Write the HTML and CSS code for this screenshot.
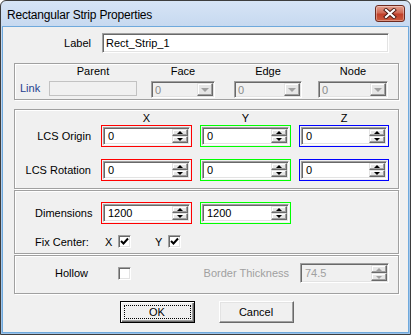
FILE: index.html
```html
<!DOCTYPE html>
<html lang="en">
<head>
  <meta charset="UTF-8" />
  <meta name="viewport" content="width=device-width, initial-scale=1.0"/>
  <title>Rectangular Strip Properties</title>
  <link rel="stylesheet" href="styles.css">
</head>
<body>
  <div class="window">
    <div class="titlebar">
      <span class="title">Rectangular Strip Properties</span>
      <button class="close-btn" type="button">
        <svg width="14" height="11" viewBox="0 0 14 11">
          <path d="M3 2 L11 9 M11 2 L3 9" stroke="#4a1a12" stroke-width="4" stroke-linecap="square"/>
          <path d="M3 2 L11 9 M11 2 L3 9" stroke="#fff" stroke-width="2.2" stroke-linecap="square"/>
        </svg>
      </button>
    </div>

    <div class="client">
      <div class="label-row">
        <span class="row-label">Label</span>
        <div class="edit name-edit">Rect_Strip_1</div>
      </div>

      <!-- link -->
      <div class="group link-group">
        <div class="col link-col"><span class="col-head"></span><span class="link-text">Link</span></div>
        <div class="col parent-col"><span class="col-head">Parent</span><div class="flat-edit"></div></div>
        <div class="col face-col">
          <span class="col-head">Face</span>
          <div class="combo"><span class="combo-val">0</span><span class="drop"><i class="tri-down gray"></i></span></div>
        </div>
        <div class="col edge-col">
          <span class="col-head">Edge</span>
          <div class="combo"><span class="combo-val">0</span><span class="drop"><i class="tri-down gray"></i></span></div>
        </div>
        <div class="col node-col">
          <span class="col-head">Node</span>
          <div class="combo"><span class="combo-val">0</span><span class="drop"><i class="tri-down gray"></i></span></div>
        </div>
      </div>

      <!-- lcs -->
      <div class="group lcs-group">
        <div class="grid4 axis-row">
          <span></span><span class="axis">X</span><span class="axis">Y</span><span class="axis">Z</span>
        </div>
        <div class="grid4">
          <span class="row-label">LCS Origin</span>
          <div class="spin red"><div class="edit spin-edit"><span class="val">0</span><span class="arrows"><span class="arr"><i class="tri-up"></i></span><span class="arr"><i class="tri-down"></i></span></span></div></div>
          <div class="spin green"><div class="edit spin-edit"><span class="val">0</span><span class="arrows"><span class="arr"><i class="tri-up"></i></span><span class="arr"><i class="tri-down"></i></span></span></div></div>
          <div class="spin blue"><div class="edit spin-edit"><span class="val">0</span><span class="arrows"><span class="arr"><i class="tri-up"></i></span><span class="arr"><i class="tri-down"></i></span></span></div></div>
        </div>
        <div class="grid4 second-row">
          <span class="row-label">LCS Rotation</span>
          <div class="spin red"><div class="edit spin-edit"><span class="val">0</span><span class="arrows"><span class="arr"><i class="tri-up"></i></span><span class="arr"><i class="tri-down"></i></span></span></div></div>
          <div class="spin green"><div class="edit spin-edit"><span class="val">0</span><span class="arrows"><span class="arr"><i class="tri-up"></i></span><span class="arr"><i class="tri-down"></i></span></span></div></div>
          <div class="spin blue"><div class="edit spin-edit"><span class="val">0</span><span class="arrows"><span class="arr"><i class="tri-up"></i></span><span class="arr"><i class="tri-down"></i></span></span></div></div>
        </div>
      </div>

      <!-- dimensions -->
      <div class="group dim-group">
        <div class="grid4">
          <span class="left-label">Dimensions</span>
          <div class="spin red"><div class="edit spin-edit"><span class="val">1200</span><span class="arrows"><span class="arr"><i class="tri-up"></i></span><span class="arr"><i class="tri-down"></i></span></span></div></div>
          <div class="spin green"><div class="edit spin-edit"><span class="val">1200</span><span class="arrows"><span class="arr"><i class="tri-up"></i></span><span class="arr"><i class="tri-down"></i></span></span></div></div>
        </div>
        <div class="fix-row">
          <span class="fix-label">Fix Center:</span>
          <span class="axis-label">X</span>
          <span class="check"><svg width="9" height="9" viewBox="0 0 9 9"><path d="M1 4 L3.5 6.5 L8 1.5" stroke="#000" stroke-width="2" fill="none"/></svg></span>
          <span class="axis-label y-label">Y</span>
          <span class="check"><svg width="9" height="9" viewBox="0 0 9 9"><path d="M1 4 L3.5 6.5 L8 1.5" stroke="#000" stroke-width="2" fill="none"/></svg></span>
        </div>
      </div>

      <!-- hollow -->
      <div class="group hollow-group">
        <div class="grid4">
          <span class="row-label hollow-label">Hollow</span>
          <div><span class="check hollow-check"></span></div>
          <span class="row-label disabled">Border Thickness</span>
          <div class="edit spin-edit thick-edit"><span class="val disabled">74.5</span><span class="arrows"><span class="arr"><i class="tri-up gray"></i></span><span class="arr"><i class="tri-down gray"></i></span></span></div>
        </div>
      </div>

      <div class="buttons">
        <button class="btn default" type="button"><span class="focus">OK</span></button>
        <button class="btn" type="button">Cancel</button>
      </div>
    </div>
  </div>
</body>
</html>
```

FILE: styles.css
```css
body {
  margin: 0;
  background-color: #fff;
  font-family: "Liberation Sans", Arial, sans-serif;
  font-size: 11px;
  color: #000;
}
.window {
  width: 411px;
  height: 335px;
  box-sizing: border-box;
  border: 1px solid #3d3d3d;
  border-radius: 6px 6px 0 0;
  background: linear-gradient(#d6e4f5, #c4d7ef 30px, #9cc3ea);
  display: flex;
  flex-direction: column;
}
.titlebar {
  height: 26px;
  display: flex;
  align-items: flex-start;
  flex-shrink: 0;
}
.title {
  font-size: 12px;
  letter-spacing: -0.2px;
  line-height: 26px;
  padding-left: 6px;
  padding-top: 1px;
}
.close-btn {
  margin-left: auto;
  margin-right: 5px;
  margin-top: 4px;
  width: 30px;
  height: 17px;
  padding: 0;
  border: 1px solid #6e2a1f;
  border-radius: 3px;
  background: linear-gradient(#e3a08f, #d06a55 45%, #c0402a 55%, #cc5b3e);
  box-shadow: inset 0 0 0 1px rgba(255,255,255,0.35);
  display: flex;
  align-items: center;
  justify-content: center;
}
.client {
  flex: 1;
  margin: 0 2px 2px 2px;
  background-color: #f0f0f0;
  padding: 6px 9px 0 11px;
  box-shadow: 0 0 0 1px #6fa9dc;
}

/* shared 3d borders */
.edit, .combo, .check {
  box-sizing: border-box;
  border: 1px solid;
  border-color: #a0a0a0 #fff #fff #a0a0a0;
  box-shadow: inset 1px 1px 0 #696969, inset -1px -1px 0 #e3e3e3;
}
.arr, .drop {
  box-sizing: border-box;
  border: 1px solid;
  border-color: #e3e3e3 #696969 #696969 #e3e3e3;
  box-shadow: inset -1px -1px 0 #a0a0a0, inset 1px 1px 0 #fff;
  background-color: #e6e6e6;
  display: flex;
  align-items: center;
  justify-content: center;
}

.label-row {
  display: flex;
  align-items: center;
}
.label-row .row-label {
  width: 79px;
}
.row-label {
  box-sizing: border-box;
  text-align: right;
  padding-right: 2px;
}
.name-edit {
  margin-left: 9px;
  width: 287px;
  height: 20px;
  background-color: #fff;
  padding-left: 3px;
  line-height: 18px;
}

.group {
  box-sizing: border-box;
  border: 1px solid #a0a0a0;
  box-shadow: inset 1px 1px 0 #fff, 1px 1px 0 #fff;
}
.link-group {
  margin-top: 10px;
  height: 37px;
  display: flex;
  padding: 1px 0 0 5px;
}
.col {
  display: flex;
  flex-direction: column;
  align-items: center;
}
.col-head {
  height: 13px;
  line-height: 13px;
  margin-bottom: 3px;
}
.link-col {
  width: 29px;
  align-items: flex-start;
}
.link-text {
  color: #1f3f8f;
  line-height: 15px;
}
.parent-col { width: 88px; }
.face-col { width: 64px; margin-left: 14px; }
.edge-col { width: 68px; margin-left: 19px; }
.node-col { width: 70px; margin-left: 16px; }
.flat-edit {
  box-sizing: border-box;
  width: 100%;
  height: 15px;
  border: 1px solid #c2c2c2;
  background-color: #f0f0f0;
}
.combo {
  width: 100%;
  height: 17px;
  background-color: #f0f0f0;
  display: flex;
  align-items: center;
  padding: 1px;
}
.combo-val {
  color: #8a8a8a;
  padding-left: 2px;
}
.drop {
  margin-left: auto;
  width: 16px;
  height: 13px;
}
.tri-down, .tri-up {
  display: block;
  width: 0;
  height: 0;
  border-left: 3px solid transparent;
  border-right: 3px solid transparent;
}
.tri-down { border-top: 3px solid #000; }
.tri-up { border-bottom: 3px solid #000; }
.drop .tri-down {
  border-left-width: 4px;
  border-right-width: 4px;
  border-top-width: 4px;
}
.tri-down.gray { border-top-color: #a0a0a0; }
.tri-up.gray { border-bottom-color: #a0a0a0; }

.lcs-group {
  margin-top: 9px;
  height: 80px;
  padding-top: 2px;
}
.grid4 {
  display: grid;
  grid-template-columns: 77px 91px 91px 90px;
  column-gap: 8px;
  align-items: center;
  padding-left: 1px;
}
.axis-row {
  height: 13px;
  line-height: 13px;
}
.axis {
  text-align: center;
}
.second-row {
  margin-top: 12px;
}
.spin {
  box-sizing: border-box;
  height: 22px;
  border: 1px solid;
  padding: 1px;
}
.spin.red { border-color: #f00; }
.spin.green { border-color: #0f0; }
.spin.blue { border-color: #00f; }
.spin-edit {
  height: 18px;
  background-color: #fff;
  display: flex;
  align-items: center;
}
.val {
  padding-left: 4px;
}
.arrows {
  margin-left: auto;
  margin-right: 1px;
  display: flex;
  flex-direction: column;
}
.arr {
  width: 16px;
  height: 7px;
}

.dim-group {
  margin-top: 1px;
  height: 64px;
  padding-top: 11px;
}
.left-label {
  padding-left: 19px;
}
.fix-row {
  display: flex;
  align-items: center;
  margin-top: 11px;
  padding-left: 20px;
  height: 13px;
}
.fix-label { width: 70px; }
.axis-label { width: 13px; }
.y-label { margin-left: 24px; }
.check {
  width: 13px;
  height: 13px;
  background-color: #fff;
  display: flex;
  align-items: center;
  justify-content: center;
}
.check svg { display: block; }

.hollow-group {
  margin-top: 1px;
  height: 39px;
  padding-top: 7px;
}
.hollow-label { padding-right: 5px; }
.hollow-check {
  margin-left: 17px;
}
.disabled { color: #a0a0a0; }
.thick-edit {
  margin-left: 1px;
  width: 89px;
  height: 20px;
  background-color: #f0f0f0;
}
.thick-edit .arr { height: 8px; }

.buttons {
  display: flex;
  justify-content: center;
  gap: 24px;
  margin-top: 7px;
}
.btn {
  box-sizing: border-box;
  width: 75px;
  height: 22px;
  padding: 0;
  font-family: "Liberation Sans", Arial, sans-serif;
  font-size: 11px;
  color: #000;
  background-color: #f0f0f0;
  border: 1px solid;
  border-color: #fff #696969 #696969 #fff;
  box-shadow: inset -1px -1px 0 #a0a0a0, inset 1px 1px 0 #e3e3e3;
}
.btn.default {
  border: 1px solid #000;
  box-shadow: inset 1px 1px 0 #fff, inset -1px -1px 0 #696969, inset -2px -2px 0 #a0a0a0;
  padding: 3px;
}
.focus {
  display: block;
  height: 100%;
  box-sizing: border-box;
  border: 1px dotted #000;
  line-height: 12px;
}
```
